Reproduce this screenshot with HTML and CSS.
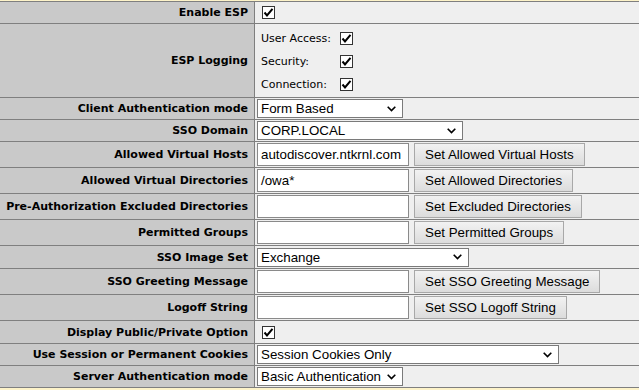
FILE: index.html
```html
<!DOCTYPE html>
<html>
<head>
<meta charset="utf-8">
<link rel="stylesheet" href="styles.css">
</head>
<body>
<div class="form">
  <div class="row h21">
    <div class="label">Enable ESP</div>
    <div class="value"><span class="cb"><svg width="13" height="13" viewBox="0 0 13 13"><path d="M2.5 6.5 L5 9.5 L10.5 2.8" fill="none" stroke="#000" stroke-width="2"/></svg></span></div>
  </div>
  <div class="row h73">
    <div class="label">ESP Logging</div>
    <div class="value">
      <div class="sub">
        <span class="subl">User Access:</span><span class="cb"><svg width="13" height="13" viewBox="0 0 13 13"><path d="M2.5 6.5 L5 9.5 L10.5 2.8" fill="none" stroke="#000" stroke-width="2"/></svg></span>
        <span class="subl">Security:</span><span class="cb"><svg width="13" height="13" viewBox="0 0 13 13"><path d="M2.5 6.5 L5 9.5 L10.5 2.8" fill="none" stroke="#000" stroke-width="2"/></svg></span>
        <span class="subl">Connection:</span><span class="cb"><svg width="13" height="13" viewBox="0 0 13 13"><path d="M2.5 6.5 L5 9.5 L10.5 2.8" fill="none" stroke="#000" stroke-width="2"/></svg></span>
      </div>
    </div>
  </div>
  <div class="row h21">
    <div class="label">Client Authentication mode</div>
    <div class="value"><div class="sel w146"><span>Form Based</span><svg width="9" height="6" viewBox="0 0 9 6"><path d="M0.7 0.7 L4.5 4.6 L8.3 0.7" fill="none" stroke="#000" stroke-width="1.6"/></svg></div></div>
  </div>
  <div class="row h21">
    <div class="label">SSO Domain</div>
    <div class="value"><div class="sel w206"><span>CORP.LOCAL</span><svg width="9" height="6" viewBox="0 0 9 6"><path d="M0.7 0.7 L4.5 4.6 L8.3 0.7" fill="none" stroke="#000" stroke-width="1.6"/></svg></div></div>
  </div>
  <div class="row h25">
    <div class="label">Allowed Virtual Hosts</div>
    <div class="value"><div class="inp">autodiscover.ntkrnl.com</div><div class="btn">Set Allowed Virtual Hosts</div></div>
  </div>
  <div class="row h25">
    <div class="label">Allowed Virtual Directories</div>
    <div class="value"><div class="inp">/owa*</div><div class="btn">Set Allowed Directories</div></div>
  </div>
  <div class="row h25">
    <div class="label">Pre-Authorization Excluded Directories</div>
    <div class="value"><div class="inp"></div><div class="btn">Set Excluded Directories</div></div>
  </div>
  <div class="row h25">
    <div class="label">Permitted Groups</div>
    <div class="value"><div class="inp"></div><div class="btn">Set Permitted Groups</div></div>
  </div>
  <div class="row h22">
    <div class="label">SSO Image Set</div>
    <div class="value"><div class="sel w212"><span>Exchange</span><svg width="9" height="6" viewBox="0 0 9 6"><path d="M0.7 0.7 L4.5 4.6 L8.3 0.7" fill="none" stroke="#000" stroke-width="1.6"/></svg></div></div>
  </div>
  <div class="row h25">
    <div class="label">SSO Greeting Message</div>
    <div class="value"><div class="inp"></div><div class="btn">Set SSO Greeting Message</div></div>
  </div>
  <div class="row h25">
    <div class="label">Logoff String</div>
    <div class="value"><div class="inp"></div><div class="btn">Set SSO Logoff String</div></div>
  </div>
  <div class="row h22">
    <div class="label">Display Public/Private Option</div>
    <div class="value"><span class="cb"><svg width="13" height="13" viewBox="0 0 13 13"><path d="M2.5 6.5 L5 9.5 L10.5 2.8" fill="none" stroke="#000" stroke-width="2"/></svg></span></div>
  </div>
  <div class="row h21">
    <div class="label">Use Session or Permanent Cookies</div>
    <div class="value"><div class="sel w302"><span>Session Cookies Only</span><svg width="9" height="6" viewBox="0 0 9 6"><path d="M0.7 0.7 L4.5 4.6 L8.3 0.7" fill="none" stroke="#000" stroke-width="1.6"/></svg></div></div>
  </div>
  <div class="row h21">
    <div class="label">Server Authentication mode</div>
    <div class="value"><div class="sel w146"><span>Basic Authentication</span><svg width="9" height="6" viewBox="0 0 9 6"><path d="M0.7 0.7 L4.5 4.6 L8.3 0.7" fill="none" stroke="#000" stroke-width="1.6"/></svg></div></div>
  </div>
</div>
</body>
</html>
```
FILE: styles.css
```css
html, body {
  margin: 0;
  padding: 0;
  background: #fdf3c9;
}
body {
  padding-top: 1px;
  color: #000;
  font-family: "DejaVu Sans", Verdana, sans-serif;
  font-size: 11px;
}
.form {
  border-top: 1px solid #7f7f7f;
}
.row {
  display: flex;
  border-bottom: 1px solid #7f7f7f;
}
.h21 { height: 21px; }
.h22 { height: 22px; }
.h25 { height: 25px; }
.h73 { height: 73px; }
.label {
  width: 255px;
  flex: none;
  box-sizing: border-box;
  background: #c9c9c9;
  border-right: 1px solid #7f7f7f;
  font-weight: bold;
  display: flex;
  align-items: center;
  justify-content: flex-end;
  padding-right: 6px;
  white-space: nowrap;
}
.value {
  flex: 1;
  background: #efefef;
  display: flex;
  align-items: center;
  padding: 0 2px;
  gap: 5px;
  min-width: 0;
}
.cb {
  display: block;
  width: 13px;
  height: 13px;
  box-sizing: border-box;
  border: 1px solid #333;
  background: #fff;
  margin-left: 5px;
}
.cb svg {
  display: block;
  margin: -1px 0 0 -1px;
}
.sub {
  display: grid;
  grid-template-columns: 79px auto;
  grid-auto-rows: 23px;
  align-items: center;
  padding-left: 4px;
  padding-top: 1px;
}
.sub .cb { margin-left: 0; }
.subl { white-space: nowrap; }
.sel {
  height: 19px;
  box-sizing: border-box;
  border: 1px solid #7a7a7a;
  background: #fff;
  font-family: "Liberation Sans", Arial, sans-serif;
  font-size: 13.33px;
  display: flex;
  align-items: center;
  justify-content: space-between;
  padding: 0 6px 0 3px;
  white-space: nowrap;
}
.sel svg { display: block; flex: none; }
.w146 { width: 146px; }
.w206 { width: 206px; }
.w212 { width: 212px; }
.w302 { width: 302px; }
.inp {
  width: 152px;
  height: 23px;
  box-sizing: border-box;
  border: 1px solid #8a8a8a;
  background: #fff;
  font-family: "Liberation Sans", Arial, sans-serif;
  font-size: 13.33px;
  line-height: 21px;
  padding: 0 3px;
  white-space: nowrap;
}
.btn {
  height: 23px;
  box-sizing: border-box;
  border: 1px solid #a8a8a8;
  background: linear-gradient(#f2f2f2, #dcdcdc);
  font-family: "Liberation Sans", Arial, sans-serif;
  font-size: 13.33px;
  line-height: 21px;
  padding: 0 10px;
  white-space: nowrap;
}
```
